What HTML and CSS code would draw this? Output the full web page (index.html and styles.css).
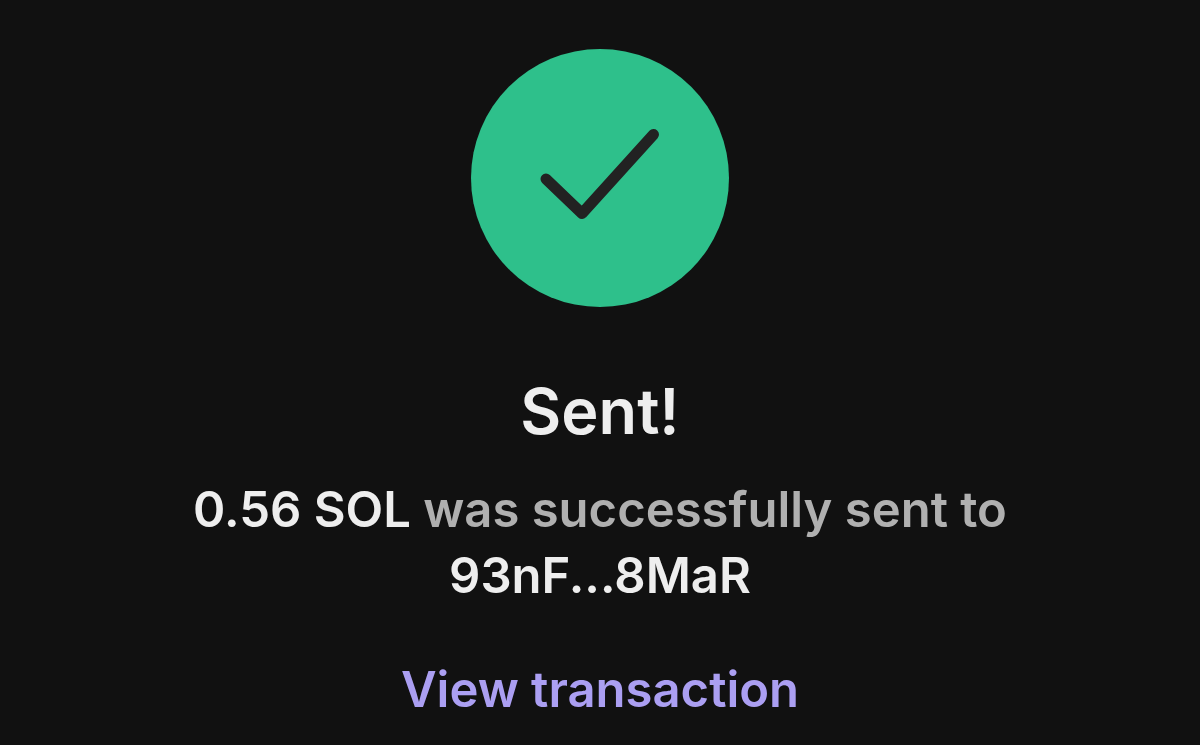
FILE: index.html
```html
<!DOCTYPE html>
<html lang="en">
<head>
    <meta charset="UTF-8">
    <meta name="viewport" content="width=device-width, initial-scale=1">
    <title>Sent</title>
    <link rel="stylesheet" href="styles.css">
</head>
<body>
    <main class="container">
        <svg class="success-icon" viewBox="0 0 258 258" aria-hidden="true">
            <circle cx="129" cy="129" r="129" fill="#2ec08b"></circle>
            <path d="M75 130L111 164.500L182.500 85.500" fill="none" stroke="#222222" stroke-width="11" stroke-linecap="round" stroke-linejoin="round"></path>
        </svg>
        <h1>Sent!</h1>
        <p class="message"><strong>0.56 SOL</strong> was successfully sent to <strong>93nF...8MaR</strong></p>
        <a class="view-link" href="#">View transaction</a>
    </main>
</body>
</html>
```

FILE: styles.css
```css
body {
    margin: 0;
    font-family: Inter, "Liberation Sans", sans-serif;
    background-color: #111111;
    color: #eeeeee;
}

.container {
    display: flex;
    flex-direction: column;
    align-items: center;
    padding: 49px 24px 24px;
    text-align: center;
}

.success-icon {
    width: 258px;
    height: 258px;
}

h1 {
    margin: 64px 0 26px;
    font-size: 63px;
    line-height: 80px;
    font-weight: 600;
}

.message {
    max-width: 860px;
    margin: 0;
    font-size: 49px;
    line-height: 66px;
    font-weight: 600;
    color: #b0b0b0;
}

.message strong {
    font-weight: 600;
    color: #eeeeee;
}

.view-link {
    margin-top: 48px;
    font-size: 49px;
    line-height: 66px;
    font-weight: 600;
    color: #ab9ff2;
    text-decoration: none;
}
```
